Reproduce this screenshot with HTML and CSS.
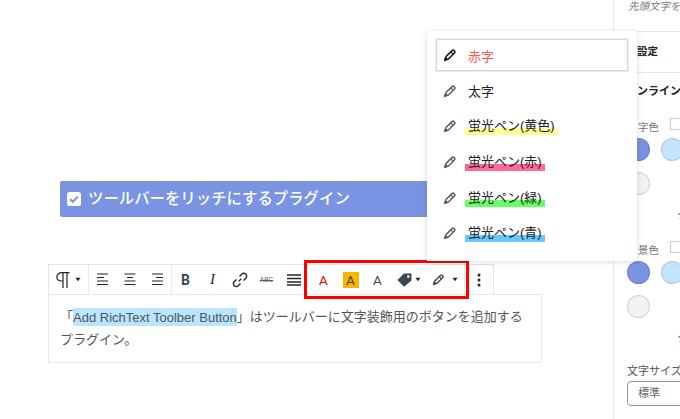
FILE: index.html
```html
<!DOCTYPE html>
<html lang="ja">
<head>
<meta charset="utf-8">
<title>Toolbar</title>
<link rel="stylesheet" href="styles.css">
</head>
<body>
<svg class="defs" width="0" height="0" aria-hidden="true">
  <symbol id="pencil" viewBox="0 0 16 16">
    <path d="M2.500 13.500 3.500 9.800 10.600 2.700A1.200 1.200 0 0 1 12.300 2.700L13.300 3.700A1.200 1.200 0 0 1 13.300 5.400L6.200 12.500Z" fill="#fff" stroke="currentColor" stroke-width="1.700" stroke-linejoin="round"/>
    <path d="M9 4.500 11.500 7M1.800 14.200 5 13.200 2.800 11Z" fill="currentColor" stroke="currentColor" stroke-width="1.300"/>
  </symbol>
  <symbol id="caret" viewBox="0 0 7 5"><path d="M0.500 0.500H6.500L3.500 4.500Z" fill="currentColor"/></symbol>
</svg>
<div class="page">
  <main class="editor">
    <h2 class="heading">
      <svg class="check" width="14" height="14" viewBox="0 0 14 14"><rect width="14" height="14" rx="2.500" fill="#fff"/><path d="M3.200 7.200 5.800 9.800 10.800 4.600" fill="none" stroke="#7b93e3" stroke-width="2"/></svg>
      <span>ツールバーをリッチにするプラグイン</span>
    </h2>
    <div class="block">
      <div class="toolbar">
        <div class="group group-format">
          <span class="btn btn-wide">
            <svg width="14" height="16" viewBox="0 0 14 16"><path d="M13.500 0.700H6C3 0.700 0.800 2.500 0.800 5S3 9 6 9H7V0.700M7 0.700V16M11 0.700V16" fill="none" stroke="#1f262d" stroke-width="1.200"/></svg>
            <svg class="caret" width="6" height="5"><use href="#caret"/></svg>
          </span>
        </div>
        <div class="group">
          <span class="btn"><svg width="12" height="13" viewBox="0 0 12 13"><path d="M0 1H11M0 4.500H7M0 8H11M0 11.500H11" stroke="#1f262d" stroke-width="1.100"/></svg></span>
          <span class="btn"><svg width="12" height="13" viewBox="0 0 12 13"><path d="M0.500 1H11.500M3 4.500H9M0.500 8H11.500M0.500 11.500H11.500" stroke="#1f262d" stroke-width="1.100"/></svg></span>
          <span class="btn"><svg width="12" height="13" viewBox="0 0 12 13"><path d="M1 1H12M5 4.500H12M1 8H12M1 11.500H12" stroke="#1f262d" stroke-width="1.100"/></svg></span>
        </div>
        <div class="group group-style">
          <span class="btn glyph-b">B</span>
          <span class="btn glyph-i">I</span>
          <span class="btn"><svg width="16" height="16" viewBox="0 0 16 16"><path d="M6.800 9.200 9.200 6.800M7.500 4.500 9.800 2.200A2.800 2.800 0 0 1 13.800 6.200L11.500 8.500M8.500 11.500 6.200 13.800A2.800 2.800 0 0 1 2.200 9.800L4.500 7.500" fill="none" stroke="#1f262d" stroke-width="1.400"/></svg></span>
          <span class="btn glyph-abc">ABC</span>
          <span class="btn"><svg width="14" height="12" viewBox="0 0 14 12"><path d="M0 1H14M0 4.500H14M0 8H14M0 11H14" stroke="#1f262d" stroke-width="1.300"/></svg></span>
        </div>
        <div class="group group-rich">
          <span class="btn glyph-a red">A</span>
          <span class="btn"><span class="glyph-a marker">A</span></span>
          <span class="btn glyph-a">A</span>
          <span class="btn btn-tag">
            <svg width="15" height="14" viewBox="0 0 15 14"><path d="M7 0.500H14.500V7.500L7 13.800 0.500 7Z M11.300 2.200A1.300 1.300 0 1 0 11.301 2.200Z" fill="#3b4754" fill-rule="evenodd"/></svg>
            <svg class="caret" width="6" height="5"><use href="#caret"/></svg>
          </span>
          <span class="btn btn-pen">
            <svg class="icon-pen" width="13" height="13"><use href="#pencil"/></svg>
            <svg class="caret" width="6" height="5"><use href="#caret"/></svg>
          </span>
        </div>
        <div class="group group-more">
          <span class="btn"><svg width="4" height="14" viewBox="0 0 4 14"><circle cx="2" cy="2" r="1.500" fill="#1f262d"/><circle cx="2" cy="7" r="1.500" fill="#1f262d"/><circle cx="2" cy="12" r="1.500" fill="#1f262d"/></svg></span>
        </div>
        <div class="redbox"></div>
      </div>
      <p class="para">「<span class="hl">Add RichText Toolber Button</span>」はツールバーに文字装飾用のボタンを追加するプラグイン。</p>
    </div>
  </main>
  <aside class="side">
    <p class="hint">先頭文字を大きく</p>
    <h3 class="side-title">設定</h3>
    <h3 class="side-sub">ンライン</h3>
    <div class="color-label"><span>字色</span><i class="mini"></i></div>
    <div class="swatches">
      <span class="swatch blue"></span><span class="swatch pale"></span><span class="swatch grey"></span><span class="clear">クリア</span>
    </div>
    <div class="color-label"><span>景色</span><i class="mini"></i></div>
    <div class="swatches">
      <span class="swatch blue"></span><span class="swatch pale"></span><span class="swatch grey"></span><span class="clear">クリア</span>
    </div>
    <div class="size-label">文字サイズ</div>
    <div class="select">標準</div>
  </aside>
  <div class="popup">
    <div class="item focus"><svg class="pen" width="14" height="14"><use href="#pencil"/></svg><span class="red-text">赤字</span></div>
    <div class="item"><svg class="pen" width="14" height="14"><use href="#pencil"/></svg><span>太字</span></div>
    <div class="item"><svg class="pen" width="14" height="14"><use href="#pencil"/></svg><span class="mark yellow">蛍光ペン(黄色)</span></div>
    <div class="item"><svg class="pen" width="14" height="14"><use href="#pencil"/></svg><span class="mark pink">蛍光ペン(赤)</span></div>
    <div class="item"><svg class="pen" width="14" height="14"><use href="#pencil"/></svg><span class="mark green">蛍光ペン(緑)</span></div>
    <div class="item"><svg class="pen" width="14" height="14"><use href="#pencil"/></svg><span class="mark sky">蛍光ペン(青)</span></div>
  </div>
</div>
</body>
</html>
```
FILE: styles.css
```css
* { box-sizing: border-box; }
html, body { margin: 0; padding: 0; background: #fff; }
body { width: 680px; height: 419px; overflow: hidden; font-family: "Liberation Sans", "Noto Sans CJK JP", sans-serif; color: #444; }
.defs { position: absolute; }
.page { position: relative; display: flex; width: 680px; height: 419px; }
.editor { width: 613px; padding: 181px 72px 0 48px; flex: none; }
.heading { margin: 0 0 47px 12px; height: 36px; background: #7b93e3; border-radius: 2px; color: #fff; display: flex; align-items: center; gap: 7px; padding-left: 7px; font-size: 15.4px; font-weight: 500; line-height: 1; }
.check { flex: none; }
.block { position: relative; }
.toolbar { position: relative; display: flex; width: 446px; height: 30px; border: 1px solid #e2e4e7; border-bottom: 0; background: #fff; color: #1f262d; }
.group { display: flex; align-items: center; border-right: 1px solid #e8eaeb; padding: 0 1px 0 0; }
.group-format { width: 40px; }
.group-style { width: 133px; border-right: 0; }
.group-rich { width: 160px; padding-left: 5px; }
.group-more { flex: 1; border-right: 0; justify-content: center; }
.btn { width: 27px; height: 30px; flex: none; display: flex; align-items: center; justify-content: center; gap: 4px; }
.btn-wide { width: 39px; gap: 5px; }
.btn-tag { width: 35px; gap: 3px; }
.btn-pen { width: 38px; gap: 7px; }
.caret { color: #1f262d; }
.glyph-b { font: 700 14px "Roboto", sans-serif; color: #3b4754; }
.glyph-i { font: italic 400 15px "Liberation Serif", serif; }
.glyph-abc { font: 400 6.5px "Liberation Sans", sans-serif; color: #555d66; text-decoration: line-through; }
.glyph-a { font: 400 13.5px "Roboto", sans-serif; color: #3b4754; }
.red { color: #f00; }
.marker { width: 16px; height: 16px; background: #fbb500; display: flex; align-items: center; justify-content: center; }
.icon-pen { color: #3b4754; }
.redbox { position: absolute; left: 255px; top: -5px; width: 165px; height: 39px; border: 3.5px solid #f00; pointer-events: none; }
.para { margin: 0; width: 494px; height: 69px; border: 1px solid #e6e8ea; padding: 10px 11px; font-size: 13px; line-height: 23px; color: #555; }
.hl { background: #b8e6ff; padding: 1.500px 0; }
.side { flex: 1; border-left: 1px solid #e8e8e8; padding: 0; min-width: 0; overflow: hidden; white-space: nowrap; font-size: 12px; position: relative; }
.hint { margin: 0; padding: 0 0 0 14px; height: 32px; font-size: 10.5px; font-style: italic; line-height: 12px; color: #777; border-bottom: 1px solid #e2e4e7; }
.side-title { margin: 0; height: 41px; padding-left: 23px; font-size: 10.5px; line-height: 39px; font-weight: 700; color: #222; border-bottom: 1px solid #e8e8e8; }
.side-sub { margin: 0; height: 46px; padding-left: 23px; font-size: 11px; line-height: 36px; font-weight: 700; color: #222; }
.color-label { display: flex; gap: 11px; height: 16px; padding-left: 24px; font-size: 10.5px; line-height: 16px; color: #777; align-items: flex-start; }
.mini { display: block; width: 14px; height: 12px; border: 1px solid #ccc; flex: none; margin-top: -1px; }
.swatches { display: grid; grid-template-columns: repeat(2, 23px); gap: 11px; align-content: start; padding: 3px 0 0 13px; height: 107px; width: 100px; }
.swatch { width: 23px; height: 23px; border-radius: 50%; border: 1px solid rgba(0,0,0,.12); }
.blue { background: #7b93e3; }
.pale { background: #c4e3ff; }
.grey { background: #f2f2f2; }
.clear { grid-column: 1 / -1; margin: 2px 0 0 50px; font-size: 11px; line-height: 14px; color: #0073aa; }
.size-label { font-size: 11px; line-height: 14px; padding-left: 13px; color: #555; margin-top: -1px; }
.select { margin: 3px 0 0 13px; width: 100px; height: 25px; border: 1px solid #8d96a0; border-radius: 4px; font-size: 11px; line-height: 23px; padding-left: 10px; color: #666; }
.popup { position: absolute; left: 427px; top: 31px; width: 210px; height: 230px; background: #fff; box-shadow: 0 1px 6px rgba(0,0,0,.14); padding: 8px 9px; font-size: 13px; color: #222; }
.item { height: 35.6px; display: flex; align-items: center; gap: 11px; padding-left: 7px; }
.focus { height: 32px; margin-bottom: 2px; border: 1px solid #d5d8db; box-shadow: 0 0 0 1px #eee; padding-left: 6px; color: #111; }
.pen { color: #555d66; flex: none; }
.focus .pen { color: #111; }
.red-text { color: #f55; }
.mark { margin-left: -3px; padding: 0 3px; line-height: 18px; }
.yellow { background: linear-gradient(transparent 62%, #ffff99 62%); }
.pink { background: linear-gradient(transparent 62%, #ff6a97 62%); }
.green { background: linear-gradient(transparent 62%, #66ff66 62%); }
.sky { background: linear-gradient(transparent 62%, #66c8ff 62%); }
```
